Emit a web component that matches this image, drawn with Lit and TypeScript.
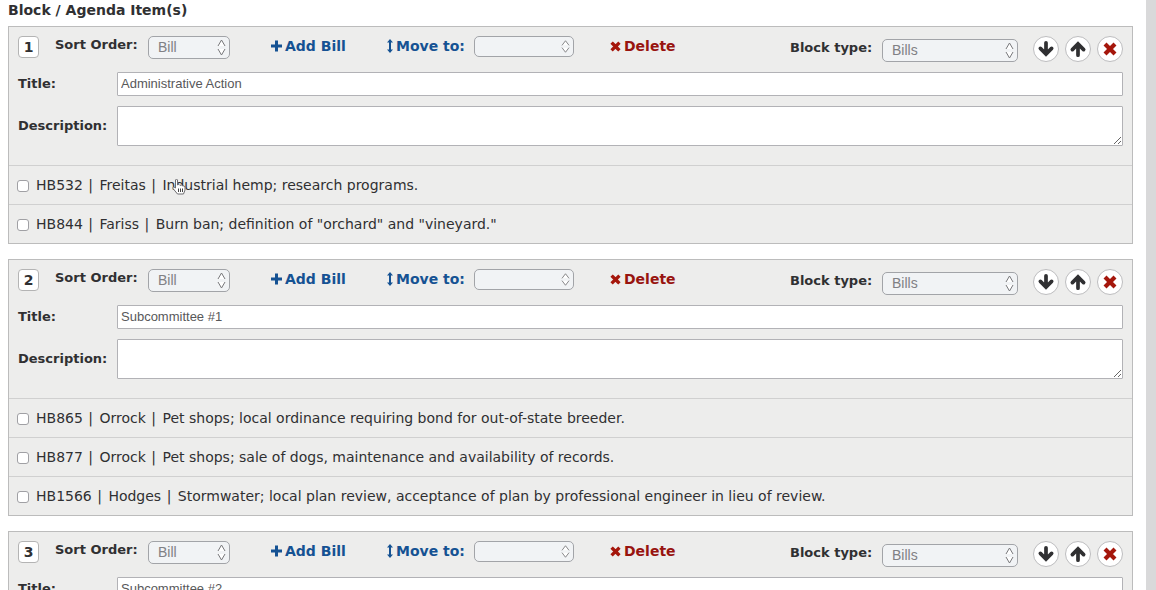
import { LitElement, html, css, svg, nothing } from "lit";
import { customElement, property } from "lit/decorators.js";

interface Bill { id: string; patron: string; summary: string; }
interface AgendaBlock { title: string; bills: Bill[]; }

const BLOCKS: AgendaBlock[] = [
  {
    title: "Administrative Action",
    bills: [
      { id: "HB532", patron: "Freitas", summary: "Industrial hemp; research programs." },
      { id: "HB844", patron: "Fariss", summary: 'Burn ban; definition of "orchard" and "vineyard."' },
    ],
  },
  {
    title: "Subcommittee #1",
    bills: [
      { id: "HB865", patron: "Orrock", summary: "Pet shops; local ordinance requiring bond for out-of-state breeder." },
      { id: "HB877", patron: "Orrock", summary: "Pet shops; sale of dogs, maintenance and availability of records." },
      { id: "HB1566", patron: "Hodges", summary: "Stormwater; local plan review, acceptance of plan by professional engineer in lieu of review." },
    ],
  },
  { title: "Subcommittee #2", bills: [] },
];

const cross = svg`<path d="M3 3L9 9M9 3L3 9" fill="none" stroke="currentColor" stroke-width="3.6" stroke-linecap="square"/>`;
const arrow = svg`<path d="M8 13.5V3.5M3 8.5L8 3.5L13 8.5" fill="none" stroke="currentColor" stroke-width="3.3" stroke-linecap="round" stroke-linejoin="miter"/>`;

@customElement("agenda-block")
export class AgendaBlockElement extends LitElement {
  @property({ type: Number }) number = 1;
  @property({ attribute: false }) block!: AgendaBlock;
  @property({ type: Boolean }) pointer = false;

  static styles = css`
    :host { display: block; color: #303032; font: 14px/20px Verdana, "DejaVu Sans", sans-serif; }
    * { box-sizing: border-box; }
    .block { border: 1px solid #bcbcbc; background: #ededec; }
    .head { display: flex; align-items: flex-start; height: 45px; padding: 9px 9px 0; font-weight: bold; }
    .number { width: 21px; height: 22px; border: 1px solid #b4b4b4; border-radius: 4px; background: #fff; text-align: center; margin-right: 16px; }
    .field { display: flex; align-items: flex-start; justify-content: space-between; }
    .name { font-size: 13px; line-height: 18px; }
    .sort { width: 175px; margin-right: 41px; }
    .move { width: 187px; margin-right: 36px; }
    .type { width: 228px; margin-left: auto; margin-right: 15px; padding-top: 3px; }
    .picker { display: grid; align-items: center; height: 23px; }
    .picker > * { grid-area: 1 / 1; }
    .picker svg { justify-self: end; margin-right: 4px; width: 9px; height: 17px; pointer-events: none; }
    .small { width: 82px; }
    .medium { width: 100px; height: 21px; }
    .medium svg { height: 13px; }
    .wide { width: 136px; }
    select { appearance: none; width: 100%; height: 100%; margin: 0; padding: 0 16px 2px 9px; border: 1px solid #a2a4a8; border-radius: 5px; background: #f1f3f5; color: #808084; font: 14px "Liberation Sans", Arial, sans-serif; }
    button { border: 0; margin: 0; padding: 0; background: none; font: inherit; color: inherit; display: flex; align-items: center; cursor: pointer; }
    .text { height: 20px; gap: 3px; }
    .blue { color: #155293; }
    .red { color: #981410; }
    .red svg { color: #a5160b; }
    .caption { display: flex; align-items: center; gap: 3px; height: 20px; }
    .add { width: 75px; margin-right: 41px; }
    .tools { display: flex; gap: 6px; }
    .round { width: 26px; height: 26px; border: 1px solid #bdbdbf; border-radius: 50%; background: #fff; justify-content: center; }
    .form { display: grid; grid-template-columns: 99px minmax(0, 1fr); align-items: center; row-gap: 10px; padding: 0 9px 19px; font-weight: bold; }
    input[type="text"], textarea { display: block; width: 100%; margin: 0; border: 1px solid #b2b2b6; border-radius: 1px; background: #fff; color: #58585a; font: 13px "Liberation Sans", Arial, sans-serif; }
    input[type="text"] { height: 24px; padding: 0 3px 1px; }
    textarea { height: 40px; resize: vertical; }
    ul { list-style: none; margin: 0; padding: 0; }
    li { position: relative; height: 39px; border-top: 1px solid #d0d0d0; }
    li label { display: flex; align-items: center; height: 38px; gap: 7px; padding-left: 8px; }
    .bar { margin: 0 2px 0 1px; }
    input[type="checkbox"] { appearance: none; flex: none; width: 12px; height: 12px; margin: 2px 0 0; border: 1px solid #a0a0a4; border-radius: 3px; background: #fff; }
    .hand { position: absolute; left: 162px; top: 12px; width: 16px; height: 17px; pointer-events: none; }
  `;

  private picker(id: string, size: string, value: string) {
    return html`<span class="picker ${size}">
      <select id=${id}><option>${value}</option></select>
      <svg viewBox="0 0 9 17" preserveAspectRatio="none" fill="#fff" stroke="#77777a" stroke-width="1"><path d="M1 7L4.5 1L8 7M1 10L4.5 16L8 10"/></svg>
    </span>`;
  }

  render() {
    return html`<section class="block">
      <div class="head">
        <span class="number">${this.number}</span>
        <div class="field sort"><label class="name" for="sort">Sort Order:</label>${this.picker("sort", "small", "Bill")}</div>
        <button class="text blue add"><svg width="11" height="12" viewBox="0 0 11 12"><path d="M5.5 .5V11.5M0 6H11" stroke="currentColor" stroke-width="3"/></svg>Add Bill</button>
        <div class="field move">
          <label class="caption blue" for="move"><svg width="6" height="14" viewBox="0 0 6 14"><path d="M3 0L6 3.5H4V10.5H6L3 14L0 10.5H2V3.5H0Z" fill="currentColor"/></svg>Move to:</label>
          ${this.picker("move", "medium", "")}
        </div>
        <button class="text red"><svg width="11" height="11" viewBox="0 0 12 12">${cross}</svg>Delete</button>
        <div class="field type"><label class="name" for="type">Block type:</label>${this.picker("type", "wide", "Bills")}</div>
        <div class="tools">
          <button class="round" aria-label="Move block down"><svg width="18" height="18" viewBox="0 0 16 16"><g transform="rotate(180 8 8)">${arrow}</g></svg></button>
          <button class="round" aria-label="Move block up"><svg width="18" height="18" viewBox="0 0 16 16">${arrow}</svg></button>
          <button class="round red" aria-label="Delete block"><svg width="14" height="14" viewBox="0 0 12 12">${cross}</svg></button>
        </div>
      </div>
      <div class="form">
        <label class="name" for="title">Title:</label><input id="title" type="text" .value=${this.block.title} />
        <label class="name" for="description">Description:</label><textarea id="description"></textarea>
      </div>
      <ul>
        ${this.block.bills.map((bill, i) => html`<li>
          <label><input type="checkbox" /><span>${bill.id} <span class="bar">|</span> ${bill.patron} <span class="bar">|</span> ${bill.summary}</span></label>
          ${this.pointer && i === 0
            ? html`<svg class="hand" viewBox="0 0 16 17"><path d="M4.5 10V2Q5.5 0 6.5 2V7Q8 5.5 9 7.5Q10.5 6 11.5 8Q13.5 7 14 9V12L12.5 16H6.5L2 10.5Q1.5 8 4.5 10Z" fill="#fff" stroke="#6c6c70" stroke-width="1"/><path d="M7.5 10.5V14M9.5 10.5V14M11.5 10.5V14" stroke="#444"/></svg>`
            : nothing}
        </li>`)}
      </ul>
    </section>`;
  }
}

@customElement("app-root")
export class AppRoot extends LitElement {
  static styles = css`
    :host { display: grid; grid-template-columns: minmax(0, 1fr) 10px; height: 100vh; overflow: hidden; background: #fff; color: #303032; font-family: Verdana, "DejaVu Sans", sans-serif; }
    main { padding: 0 13px 0 8px; min-height: 0; overflow: hidden; }
    h1 { margin: 0 0 6px; font-size: 14px; line-height: 20px; font-weight: bold; }
    agenda-block { margin-bottom: 15px; }
    .edge { background: #d9d9da; }
  `;
  render() {
    return html`<main>
        <h1>Block / Agenda Item(s)</h1>
        ${BLOCKS.map((block, i) => html`<agenda-block .number=${i + 1} .block=${block} .pointer=${i === 0}></agenda-block>`)}
      </main>
      <div class="edge"></div>`;
  }
}
